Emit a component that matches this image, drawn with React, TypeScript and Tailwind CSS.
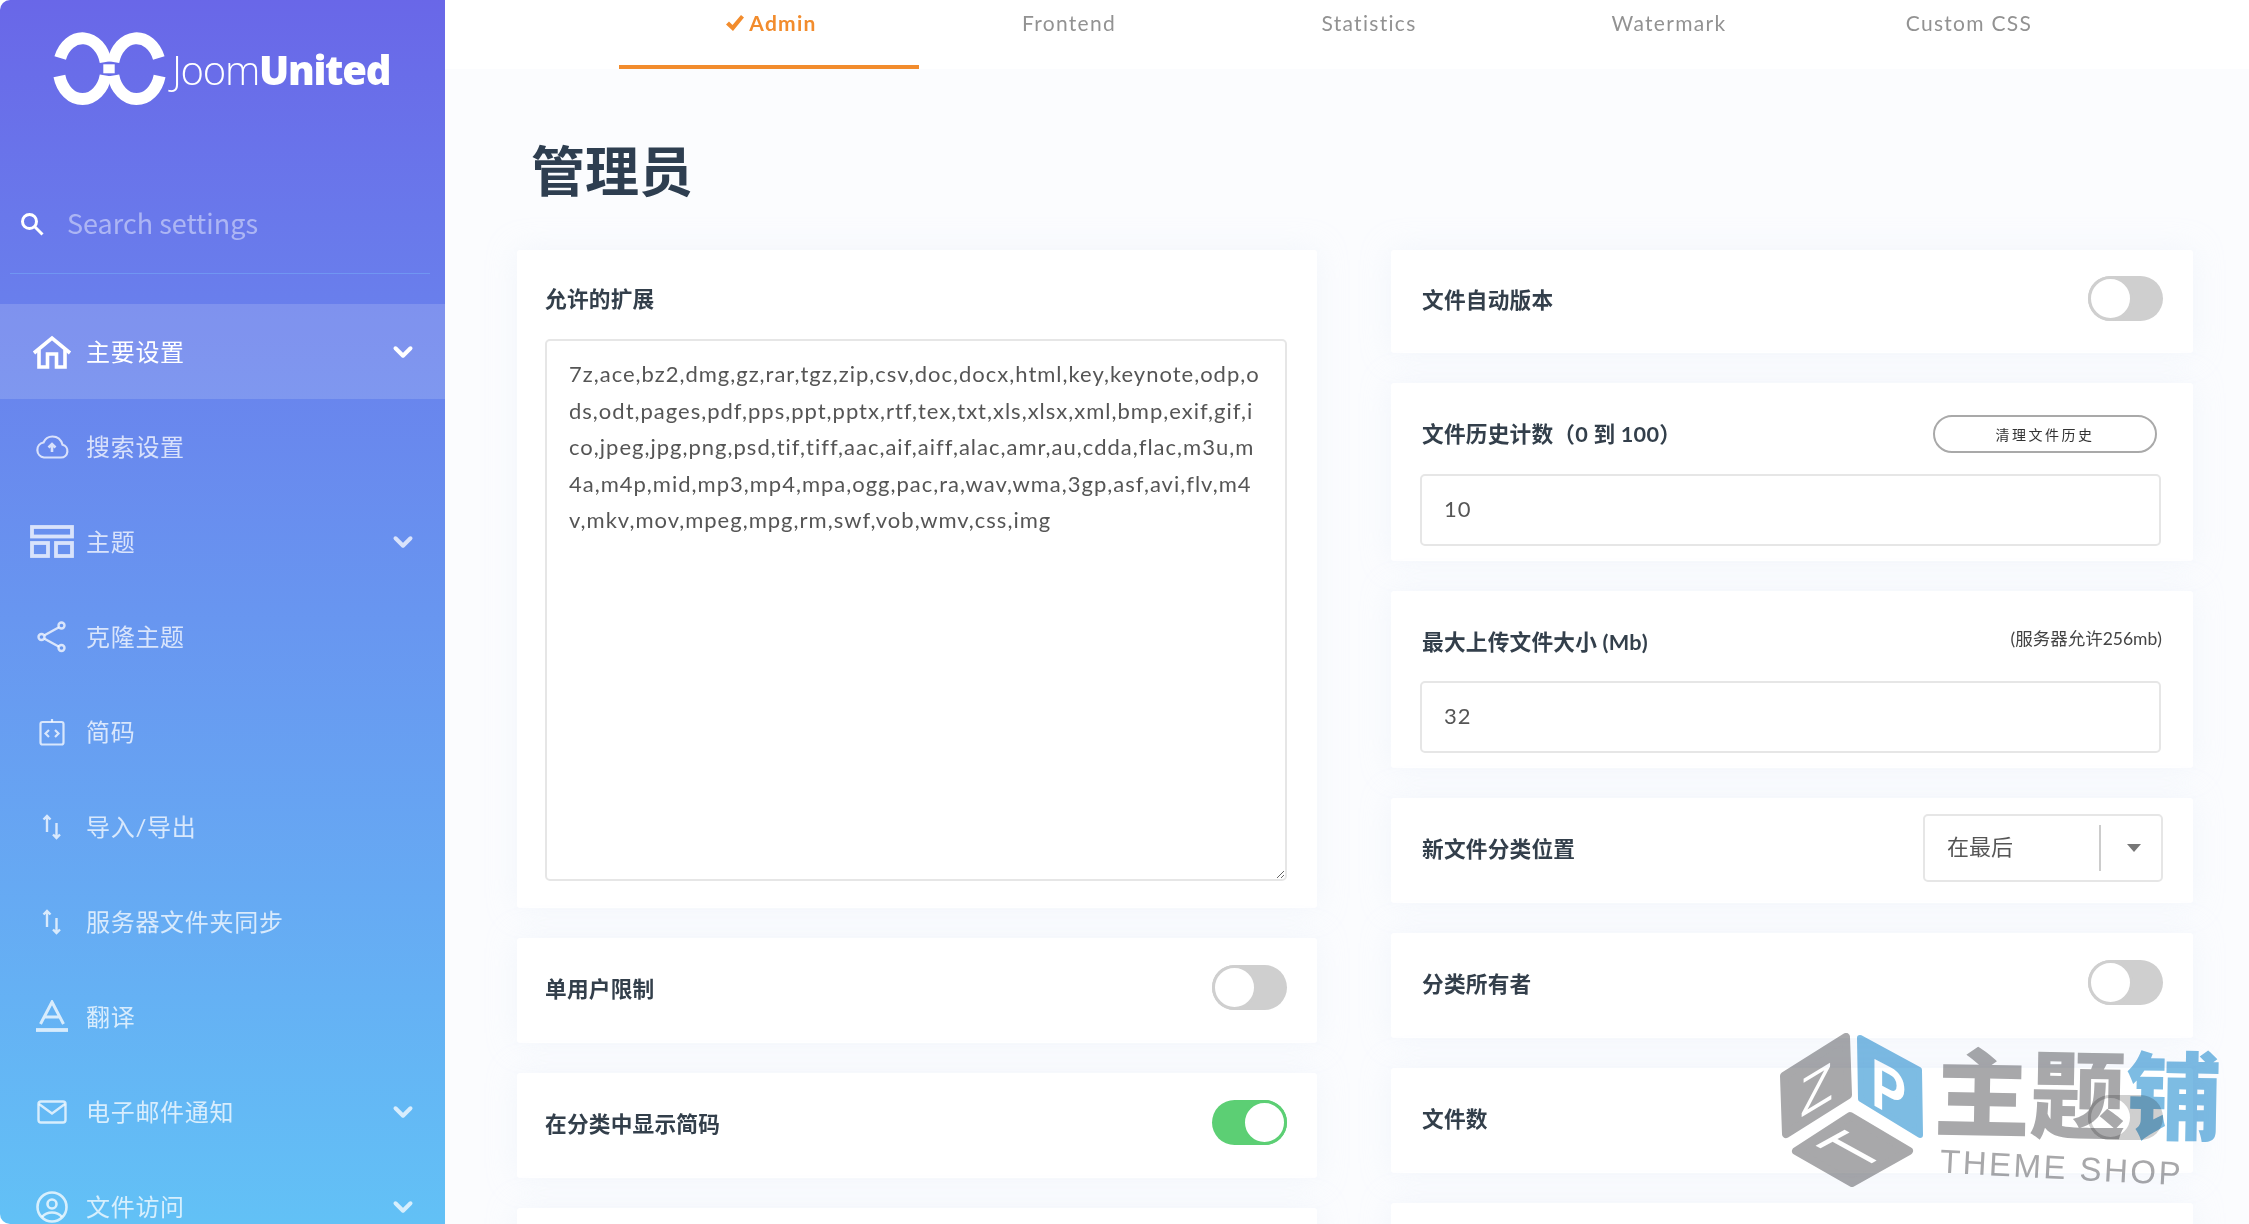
import { ChevronDown } from "lucide-react"
import type { ReactNode } from "react"

const extensions =
  "7z,ace,bz2,dmg,gz,rar,tgz,zip,csv,doc,docx,html,key,keynote,odp,ods,odt,pages,pdf,pps,ppt,pptx,rtf,tex,txt,xls,xlsx,xml,bmp,exif,gif,ico,jpeg,jpg,png,psd,tif,tiff,aac,aif,aiff,alac,amr,au,cdda,flac,m3u,m4a,m4p,mid,mp3,mp4,mpa,ogg,pac,ra,wav,wma,3gp,asf,avi,flv,m4v,mkv,mov,mpeg,mpg,rm,swf,vob,wmv,css,img"

function Logo() {
  return (
    <svg width="135" height="90" viewBox="0 0 135 90" fill="none" stroke="white" strokeWidth="12" className="shrink-0">
      <path d="M16.200 33A23.800 30.400 0 0 1 61.700 37" />
      <path d="M15.400 51A23.800 30.400 0 0 0 61.700 50.500" />
      <path d="M114.800 33A23.800 30.400 0 0 0 69.300 37" />
      <path d="M115.600 51A23.800 30.400 0 0 1 69.300 50.500" />
      <rect x="59.300" y="39.300" width="11.400" height="9" fill="white" stroke="none" />
    </svg>
  )
}

function HomeIcon() {
  return (
    <svg width="40" height="34" viewBox="0 0 40 34" fill="none" stroke="currentColor" strokeWidth="3.600">
      <path d="M2 18 20 3l18 15" />
      <path d="M7 15v17h8.500V19h9v13H33V15" />
    </svg>
  )
}

function CloudIcon() {
  return (
    <svg width="34" height="24" viewBox="0 0 34 24" fill="none" stroke="currentColor" strokeWidth="2.200">
      <path d="M9 22.500h17a6.500 6.500 0 0 0 1.500-12.800C26 4.500 22 1.500 17.500 1.500 13.500 1.500 10 4 8.500 7.500A7.600 7.600 0 0 0 9 22.500Z" />
      <path d="M17 17V9M13.500 12.500 17 9l3.500 3.500" strokeWidth="2.600" />
    </svg>
  )
}

function LayoutIcon() {
  return (
    <svg width="44" height="33" viewBox="0 0 44 33" fill="none" stroke="currentColor" strokeWidth="3.800">
      <rect x="2" y="2" width="40" height="9.500" />
      <rect x="2" y="18" width="16" height="13" />
      <rect x="26" y="18" width="16" height="13" />
    </svg>
  )
}

function ShareIcon() {
  return (
    <svg width="30" height="32" viewBox="0 0 30 32" fill="none" stroke="currentColor" strokeWidth="2.400">
      <circle cx="4.500" cy="16" r="3" />
      <circle cx="24.500" cy="4.500" r="3" />
      <circle cx="24.500" cy="27" r="3" />
      <path d="m7.500 14.300 14.500-8M7.500 17.700l14.500 8" />
    </svg>
  )
}

function CodeIcon() {
  return (
    <svg width="26" height="28" viewBox="0 0 26 28" fill="none" stroke="currentColor" strokeWidth="2.200">
      <rect x="1.500" y="4" width="23" height="22.500" rx="2" />
      <path d="M13 1v3" />
      <path d="m10 12-3.500 3.500L10 19M16 12l3.500 3.500L16 19" />
    </svg>
  )
}

function SortIcon() {
  return (
    <svg width="20" height="26" viewBox="0 0 20 26" fill="none" stroke="currentColor" strokeWidth="2.400">
      <path d="M5 2v16M1.500 5.500 5 2l3.500 3.500" />
      <path d="M14.500 9v15M11 20.500l3.500 3.500 3.500-3.500" />
    </svg>
  )
}

function TextIcon() {
  return (
    <svg width="32" height="33" viewBox="0 0 32 33" fill="none" stroke="currentColor">
      <path d="M4.500 24 16 2l11.500 22M8.500 17h15" strokeWidth="3" />
      <path d="M0 30h32" strokeWidth="3.800" />
    </svg>
  )
}

function MailIcon() {
  return (
    <svg width="30" height="24" viewBox="0 0 30 24" fill="none" stroke="currentColor" strokeWidth="2.400">
      <rect x="1.500" y="1.500" width="27" height="21" rx="2.500" />
      <path d="m2 4 13 9.500L28 4" />
    </svg>
  )
}

function UserIcon() {
  return (
    <svg width="32" height="32" viewBox="0 0 32 32" fill="none" stroke="currentColor" strokeWidth="2.600">
      <circle cx="16" cy="16" r="14.500" />
      <circle cx="16" cy="13" r="4.500" />
      <path d="M6 26c3-3.500 6.500-4.500 10-4.500S23 22.500 26 26" />
    </svg>
  )
}

const navItems: { label: string; icon: ReactNode; chevron?: boolean; active?: boolean }[] = [
  { label: "主要设置", icon: <HomeIcon />, chevron: true, active: true },
  { label: "搜索设置", icon: <CloudIcon /> },
  { label: "主题", icon: <LayoutIcon />, chevron: true },
  { label: "克隆主题", icon: <ShareIcon /> },
  { label: "简码", icon: <CodeIcon /> },
  { label: "导入/导出", icon: <SortIcon /> },
  { label: "服务器文件夹同步", icon: <SortIcon /> },
  { label: "翻译", icon: <TextIcon /> },
  { label: "电子邮件通知", icon: <MailIcon />, chevron: true },
  { label: "文件访问", icon: <UserIcon />, chevron: true },
]

function Toggle({ on }: { on?: boolean }) {
  return (
    <div className={`flex h-[45px] w-[75px] shrink-0 rounded-full ${on ? "justify-end bg-[#5ccf74]" : "justify-start bg-[#cfcfcf]"}`}>
      <div className={`h-[45px] w-[45px] rounded-full border-[3px] bg-white ${on ? "border-[#5ccf74]" : "border-[#cfcfcf]"}`} />
    </div>
  )
}

function Label({ children, right }: { children: ReactNode; right?: boolean }) {
  return <div className={`text-[21.700px] leading-7 font-bold tracking-[0.2px] text-[#333f4b] ${right ? "ml-[2px]" : ""}`}>{children}</div>
}

function Card({ children, className }: { children?: ReactNode; className?: string }) {
  return <div className={`rounded-[3px] bg-white shadow-[0_0_30px_rgba(226,234,246,0.35)] ${className ?? ""}`}>{children}</div>
}

function ToggleRow({ label, on, right }: { label: string; on?: boolean; right?: boolean }) {
  return (
    <div className="flex h-full items-center justify-between pb-[6px]">
      <div className="mt-[3px]">
        <Label right={right}>{label}</Label>
      </div>
      <Toggle on={on} />
    </div>
  )
}

function NumberInput({ value }: { value: string }) {
  return (
    <input
      readOnly
      defaultValue={value}
      className="block h-[72px] w-[741px] rounded-[5px] border-2 border-[#e6e6e6] bg-white px-[22px] pb-[3px] text-[22px] tracking-[1px] text-[#555] outline-none"
    />
  )
}

function Watermark() {
  return (
    <div className="pointer-events-none absolute top-[1032px] left-[1780px] h-[160px] w-[440px] mix-blend-multiply">
      <svg width="146" height="156" viewBox="0 0 146 156" className="absolute top-0 left-0">
        <g stroke="#a8a8aa" fill="#a8a8aa" strokeWidth="8" strokeLinejoin="round">
          <path d="M66 5 68 63 6 102 4 44Z" />
          <path d="M70 84 129 119 72 151 16 119Z" />
        </g>
        <path d="M80 6 139 38 140 103 81 67Z" fill="#7dbce3" stroke="#7dbce3" strokeWidth="6" strokeLinejoin="round" />
        <text transform="matrix(1 -0.6 0 1 20 86)" fontFamily="Liberation Sans" fontSize="54" fill="white">Z</text>
        <text transform="matrix(0.85 0.45 0 1.1 91 72)" fontFamily="Liberation Sans" fontSize="62" fill="white" fontWeight="700">P</text>
        <text transform="matrix(0.8 -0.44 1 0.55 78.400 138.600)" fontFamily="Liberation Sans" fontSize="64" fill="white">T</text>
      </svg>
      <div className="absolute top-[16px] left-[154px] flex rotate-[1deg] text-[96px] leading-[92px] font-black whitespace-nowrap">
        <span className="text-[#a8a8aa]">主题</span>
        <span className="text-[#7dbce3]">铺</span>
      </div>
      <div className="absolute top-[118px] left-[160px] rotate-[3deg] font-['Liberation_Sans',sans-serif] text-[33px] leading-9 tracking-[2.500px] whitespace-nowrap text-[#a8a8aa]">
        THEME SHOP
      </div>
    </div>
  )
}

export default function App() {
  return (
    <div className="relative flex h-[1224px] w-[2249px] overflow-hidden bg-white font-['Lato','Noto_Sans_CJK_SC',sans-serif]">
      <aside className="h-full w-[445px] shrink-0 overflow-hidden rounded-l-[10px] bg-linear-to-b from-[#6967e8] to-[#62c1f6]">
        <div className="flex h-[304px] flex-col">
          <div className="flex h-[109px] items-start pt-[25px] pl-[44px]">
            <Logo />
            <div className="mt-[20px] -ml-[7px] font-['Open_Sans',sans-serif] text-[40px] leading-[50px] tracking-[-1.300px] text-white">
              <span className="font-light">Joom</span>
              <span className="font-extrabold">United</span>
            </div>
          </div>
          <div className="mt-[86px] mr-[15px] ml-[10px] flex h-[79px] items-center border-b border-[#7096f2] pb-[21px]">
            <svg width="24" height="24" viewBox="0 0 24 24" fill="none" stroke="white" strokeWidth="3" className="ml-[10px]">
              <circle cx="9.500" cy="9.500" r="7" />
              <path d="m14.500 14.500 8 8" />
            </svg>
            <span className="ml-[23px] font-['Noto_Sans_CJK_SC',sans-serif] text-[27px] text-white/45">Search settings</span>
          </div>
        </div>
        {navItems.map((item) => (
          <div
            key={item.label}
            className={`flex h-[95px] items-center pr-[27px] ${item.active ? "bg-white/15 text-white" : "text-white/75"}`}
          >
            <div className="flex w-[104px] shrink-0 justify-center">{item.icon}</div>
            <div className="-ml-[18px] flex-1 text-[24px] tracking-[0.7px]">{item.label}</div>
            {item.chevron && <ChevronDown size={30} strokeWidth={3.200} />}
          </div>
        ))}
      </aside>

      <main className="h-full flex-1 overflow-hidden bg-[#fbfcfe]">
        <nav className="flex h-[69px] bg-white pl-[174px]">
          {["Admin", "Frontend", "Statistics", "Watermark", "Custom CSS"].map((tab, i) => (
            <div
              key={tab}
              className={`flex h-[69px] w-[300px] justify-center gap-1 pt-[7px] text-[21px] leading-8 tracking-[1.300px] ${
                i === 0 ? "border-b-[4px] border-[#f28c2d] pl-[4px] font-bold text-[#f28c2d]" : "text-[#929292]"
              }`}
            >
              {i === 0 && (
                <svg width="20" height="18" viewBox="0 0 20 18" fill="#f28c2d" className="mt-[7px]">
                  <path d="M1 10.500 4 7.500 7.500 11 16 1l3 2.500L8 17Z" />
                </svg>
              )}
              {tab}
            </div>
          ))}
        </nav>

        <div className="pl-[72px]">
          <h1 className="mt-[65px] ml-[14px] h-[116px] text-[54px] leading-[76px] font-bold text-[#2e3e50]">管理员</h1>

          <div className="grid w-[1676px] grid-cols-[800px_802px] gap-x-[74px]">
            <div className="flex flex-col gap-[30px]">
              <Card className="h-[658px] pt-[35px] pr-[30px] pl-7">
                <Label>允许的扩展</Label>
                <textarea
                  readOnly
                  defaultValue={extensions}
                  className="mt-[26px] block h-[542px] w-[742px] rounded-[5px] border-2 border-[#e6e6e6] bg-white px-[22px] py-[15px] text-[22px] leading-[36.600px] tracking-[1px] text-[#555] outline-none"
                />
              </Card>
              <Card className="h-[105px] pr-[30px] pl-7">
                <ToggleRow label="单用户限制" />
              </Card>
              <Card className="h-[105px] pr-[30px] pl-7">
                <ToggleRow label="在分类中显示简码" on />
              </Card>
              <Card className="h-[105px]" />
            </div>

            <div className="flex flex-col gap-[30px]">
              <Card className="h-[103px] pr-[30px] pl-[29px]">
                <ToggleRow label="文件自动版本" right />
              </Card>
              <Card className="h-[178px] pt-[32px] pr-[30px] pl-[29px]">
                <div className="flex h-[38px] items-center justify-between pr-[6px]">
                  <Label right>文件历史计数（0 到 100）</Label>
                  <button className="h-[38px] w-[224px] rounded-full border-2 border-[#a9a9a9] bg-white text-[14px] tracking-[2.500px] text-[#333]">
                    清理文件历史
                  </button>
                </div>
                <div className="mt-[21px]">
                  <NumberInput value="10" />
                </div>
              </Card>
              <Card className="h-[177px] pt-[32px] pr-[30px] pl-[29px]">
                <div className="flex h-[40px] justify-between">
                  <div className="pt-[5px]">
                    <Label right>最大上传文件大小 (Mb)</Label>
                  </div>
                  <div className="pr-[1px] text-[17.500px] leading-8 text-[#444]">(服务器允许256mb)</div>
                </div>
                <div className="mt-[18px]">
                  <NumberInput value="32" />
                </div>
              </Card>
              <Card className="h-[105px] pr-[30px] pl-[29px]">
                <div className="flex h-full items-center justify-between pb-[6px]">
                  <div className="mt-[3px]">
                    <Label right>新文件分类位置</Label>
                  </div>
                  <div className="flex h-[68px] w-[240px] items-center rounded-[5px] border-2 border-[#e6e6e6] bg-white pl-[22px]">
                    <span className="flex-1 pb-[3px] text-[22px] text-[#555]">在最后</span>
                    <div className="h-[46px] w-[2px] bg-[#ccc]" />
                    <div className="flex w-[60px] justify-center pl-[5px]">
                      <div className="h-0 w-0 border-x-[7px] border-t-[8px] border-x-transparent border-t-[#777]" />
                    </div>
                  </div>
                </div>
              </Card>
              <Card className="h-[105px] pr-[30px] pl-[29px]">
                <ToggleRow label="分类所有者" right />
              </Card>
              <Card className="h-[105px] pr-[30px] pl-[29px]">
                <ToggleRow label="文件数" right />
              </Card>
              <Card className="h-[105px]" />
            </div>
          </div>
        </div>
      </main>
      <Watermark />
    </div>
  )
}
